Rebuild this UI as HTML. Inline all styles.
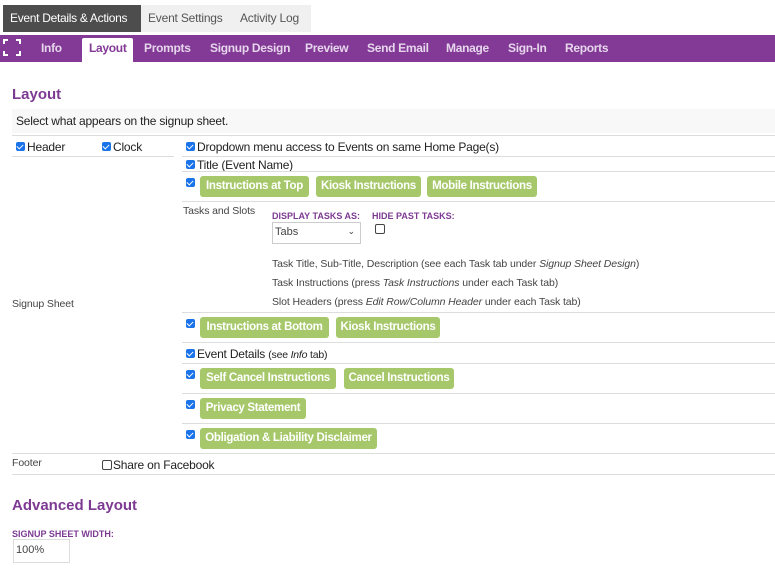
<!DOCTYPE html>
<html><head><style>
*{margin:0;padding:0;box-sizing:border-box}
body{width:775px;height:572px;position:relative;background:#fff;font-family:"Liberation Sans",sans-serif;color:#222;overflow:hidden}
.a{position:absolute;white-space:nowrap}
.hl{position:absolute;height:1px;background:#ddd}
.cb{position:absolute;width:9px;height:9px;background:#1a73e8;border-radius:2px}
.cb:after{content:"";position:absolute;left:2px;top:1px;width:3px;height:5px;border:solid #fff;border-width:0 1.5px 1.5px 0;transform:rotate(45deg)}
.ub{position:absolute;width:10px;height:10px;border:1px solid #444;border-radius:2px;background:#fff}
.btn{position:absolute;height:21px;background:#a6c86a;color:#fff;font-weight:bold;font-size:11.5px;letter-spacing:-0.3px;line-height:21px;text-align:center;border-radius:3px;white-space:nowrap;overflow:hidden}
.nav{position:absolute;top:35px;height:27px;background:#833a96;left:0;width:775px}
.nav span{position:absolute;top:0;line-height:26px;color:#e6d6ec;font-weight:bold;font-size:12px;letter-spacing:-0.3px}
.t13{font-size:12px;letter-spacing:-0.2px}
.t11{font-size:10.5px;color:#444;letter-spacing:-0.1px}
.lbl{font-size:9px;font-weight:bold;color:#7d3a93}
</style></head><body>
<div class="a" style="left:3px;top:5px;width:138px;height:27px;background:#4d4d4d;color:#fff;font-size:12px;letter-spacing:-0.3px;line-height:27px;padding-left:7px">Event Details &amp; Actions</div>
<div class="a" style="left:141px;top:5px;width:170px;height:27px;background:#f0f0f0;color:#555;font-size:12px;letter-spacing:-0.2px;line-height:27px;padding-left:7px">Event Settings<span style="position:absolute;left:99px">Activity Log</span></div>
<div class="nav">
<svg style="position:absolute;left:3px;top:4px" width="18" height="17" viewBox="0 0 18 17" fill="none" stroke="#fff" stroke-width="2"><path d="M1 5V1h4M13 1h4v4M17 12v4h-4M5 16H1v-4"/></svg>
<span style="left:41px">Info</span>
<div style="position:absolute;left:82px;top:3px;width:51px;height:24px;background:#fff;border-radius:2px 2px 0 0"></div>
<span style="left:89px;top:0;color:#833a96">Layout</span>
<span style="left:144px">Prompts</span>
<span style="left:210px">Signup Design</span>
<span style="left:305px">Preview</span>
<span style="left:367px">Send Email</span>
<span style="left:446px">Manage</span>
<span style="left:508px">Sign-In</span>
<span style="left:565px">Reports</span>
</div>
<div class="a" style="left:12px;top:86px;font-size:15px;font-weight:bold;color:#7d3a93">Layout</div>
<div class="a t13" style="left:12px;top:109px;width:763px;height:24px;background:#f8f8f8;line-height:24px;padding-left:4px">Select what appears on the signup sheet.</div>
<div class="hl" style="left:12px;top:135px;width:763px"></div>
<div class="cb" style="left:16px;top:142px"></div><div class="a t13" style="left:27px;top:140px">Header</div>
<div class="cb" style="left:102px;top:142px"></div><div class="a t13" style="left:113px;top:140px">Clock</div>
<div class="hl" style="left:12px;top:156px;width:162px"></div>
<div class="cb" style="left:186px;top:142px"></div><div class="a t13" style="left:197px;top:140px">Dropdown menu access to Events on same Home Page(s)</div>
<div class="hl" style="left:182px;top:156px;width:593px"></div>
<div class="cb" style="left:186px;top:160px"></div><div class="a t13" style="left:197px;top:158px">Title (Event Name)</div>
<div class="hl" style="left:182px;top:171px;width:593px"></div>
<div class="cb" style="left:186px;top:178px"></div>
<div class="btn" style="left:200px;top:176px;width:109px">Instructions at Top</div>
<div class="btn" style="left:316px;top:176px;width:105px">Kiosk Instructions</div>
<div class="btn" style="left:427px;top:176px;width:110px">Mobile Instructions</div>
<div class="hl" style="left:182px;top:201px;width:593px"></div>
<div class="a t11" style="left:183px;top:205px">Tasks and Slots</div>
<div class="a lbl" style="left:272px;top:211px">DISPLAY TASKS AS:</div>
<div class="a lbl" style="left:372px;top:211px">HIDE PAST TASKS:</div>
<div class="a" style="left:272px;top:222px;width:89px;height:22px;border:1px solid #ccc;font-size:11px;color:#444;padding:3px 0 0 2px">Tabs<span style="position:absolute;right:5px;top:3px;font-size:9px">&#8964;</span></div>
<div class="ub" style="left:375px;top:224px"></div>
<div class="a t11" style="left:272px;top:258px">Task Title, Sub-Title, Description (see each Task tab under <i>Signup Sheet Design</i>)</div>
<div class="a t11" style="left:272px;top:277px">Task Instructions (press <i>Task Instructions</i> under each Task tab)</div>
<div class="a t11" style="left:272px;top:296px">Slot Headers (press <i>Edit Row/Column Header</i> under each Task tab)</div>
<div class="a t11" style="left:12px;top:298px">Signup Sheet</div>
<div class="hl" style="left:182px;top:312px;width:593px"></div>
<div class="cb" style="left:186px;top:319px"></div>
<div class="btn" style="left:200px;top:317px;width:129px">Instructions at Bottom</div>
<div class="btn" style="left:336px;top:317px;width:104px">Kiosk Instructions</div>
<div class="hl" style="left:182px;top:342px;width:593px"></div>
<div class="cb" style="left:186px;top:349px"></div><div class="a t13" style="left:197px;top:347px">Event Details <span style="font-size:10.5px">(see <i>Info</i> tab)</span></div>
<div class="hl" style="left:182px;top:363px;width:593px"></div>
<div class="cb" style="left:186px;top:370px"></div>
<div class="btn" style="left:200px;top:368px;width:136px">Self Cancel Instructions</div>
<div class="btn" style="left:344px;top:368px;width:110px">Cancel Instructions</div>
<div class="hl" style="left:182px;top:393px;width:593px"></div>
<div class="cb" style="left:186px;top:400px"></div>
<div class="btn" style="left:200px;top:398px;width:106px">Privacy Statement</div>
<div class="hl" style="left:182px;top:423px;width:593px"></div>
<div class="cb" style="left:186px;top:430px"></div>
<div class="btn" style="left:200px;top:428px;width:177px">Obligation &amp; Liability Disclaimer</div>
<div class="hl" style="left:12px;top:453px;width:763px"></div>
<div class="a t11" style="left:12px;top:457px">Footer</div>
<div class="ub" style="left:102px;top:460px"></div><div class="a t13" style="left:113px;top:458px">Share on Facebook</div>
<div class="hl" style="left:12px;top:474px;width:763px"></div>
<div class="a" style="left:12px;top:497px;font-size:15px;font-weight:bold;color:#7d3a93">Advanced Layout</div>
<div class="a lbl" style="left:12px;top:529px">SIGNUP SHEET WIDTH:</div>
<div class="a" style="left:13px;top:539px;width:57px;height:24px;border:1px solid #ddd;font-size:11px;color:#444;padding:4px 0 0 2px">100%</div>
</body></html>
